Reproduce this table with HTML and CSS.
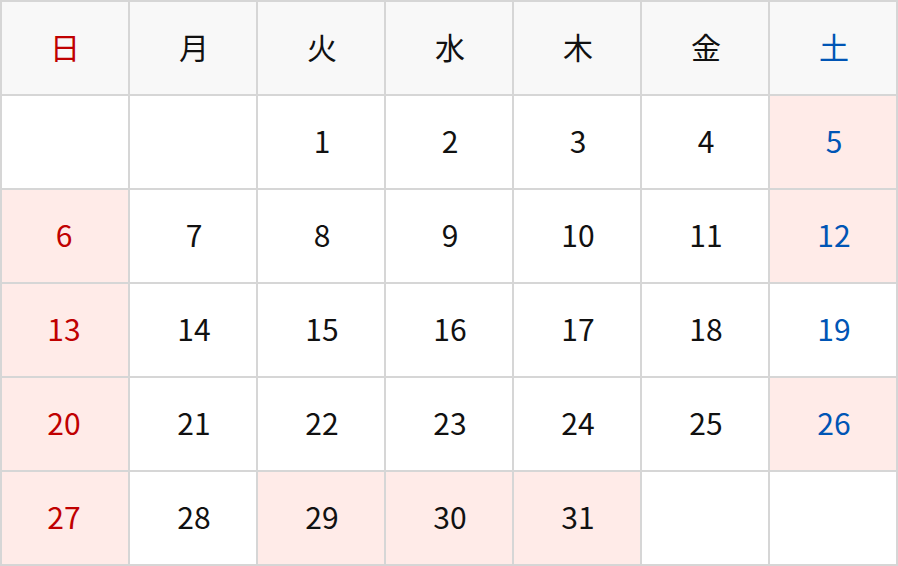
FILE: index.html
```html
<!DOCTYPE html>
<html lang="ja">
<head>
<meta charset="utf-8">
<link rel="stylesheet" href="styles.css">
</head>
<body>
<div class="cal">
  <div class="cell head sun">日</div>
  <div class="cell head">月</div>
  <div class="cell head">火</div>
  <div class="cell head">水</div>
  <div class="cell head">木</div>
  <div class="cell head">金</div>
  <div class="cell head sat">土</div>

  <div class="cell first"></div>
  <div class="cell"></div>
  <div class="cell">1</div>
  <div class="cell">2</div>
  <div class="cell">3</div>
  <div class="cell">4</div>
  <div class="cell sat hol">5</div>

  <div class="cell sun hol">6</div>
  <div class="cell">7</div>
  <div class="cell">8</div>
  <div class="cell">9</div>
  <div class="cell">10</div>
  <div class="cell">11</div>
  <div class="cell sat hol">12</div>

  <div class="cell sun hol">13</div>
  <div class="cell">14</div>
  <div class="cell">15</div>
  <div class="cell">16</div>
  <div class="cell">17</div>
  <div class="cell">18</div>
  <div class="cell sat">19</div>

  <div class="cell sun hol">20</div>
  <div class="cell">21</div>
  <div class="cell">22</div>
  <div class="cell">23</div>
  <div class="cell">24</div>
  <div class="cell">25</div>
  <div class="cell sat hol">26</div>

  <div class="cell sun hol">27</div>
  <div class="cell">28</div>
  <div class="cell hol">29</div>
  <div class="cell hol">30</div>
  <div class="cell hol">31</div>
  <div class="cell"></div>
  <div class="cell"></div>
</div>
</body>
</html>
```

FILE: styles.css
```css
html, body {
  margin: 0;
  padding: 0;
  background: #ffffff;
}

.cal {
  width: 898px;
  height: 566px;
  box-sizing: border-box;
  display: grid;
  grid-template-columns: repeat(7, 126px);
  grid-template-rows: repeat(6, 92px);
  gap: 2px;
  padding: 2px;
  background: #d6d6d6;
  font-family: "Noto Sans CJK JP", "Noto Sans", sans-serif;
  font-size: 30px;
  color: #111111;
}

.cell {
  background: #ffffff;
  display: flex;
  align-items: center;
  justify-content: center;
  box-sizing: border-box;
  padding: 0 0 4px 2px;
}

.head {
  background: #f8f8f8;
}

.hol {
  background: #ffebe8;
}

.sun {
  color: #c00000;
}

.hol.sun {
  padding: 0 2px 4px 0;
}

.head.sun {
  padding: 0 0 4px 0;
}

.sat {
  color: #0055b5;
}
```
